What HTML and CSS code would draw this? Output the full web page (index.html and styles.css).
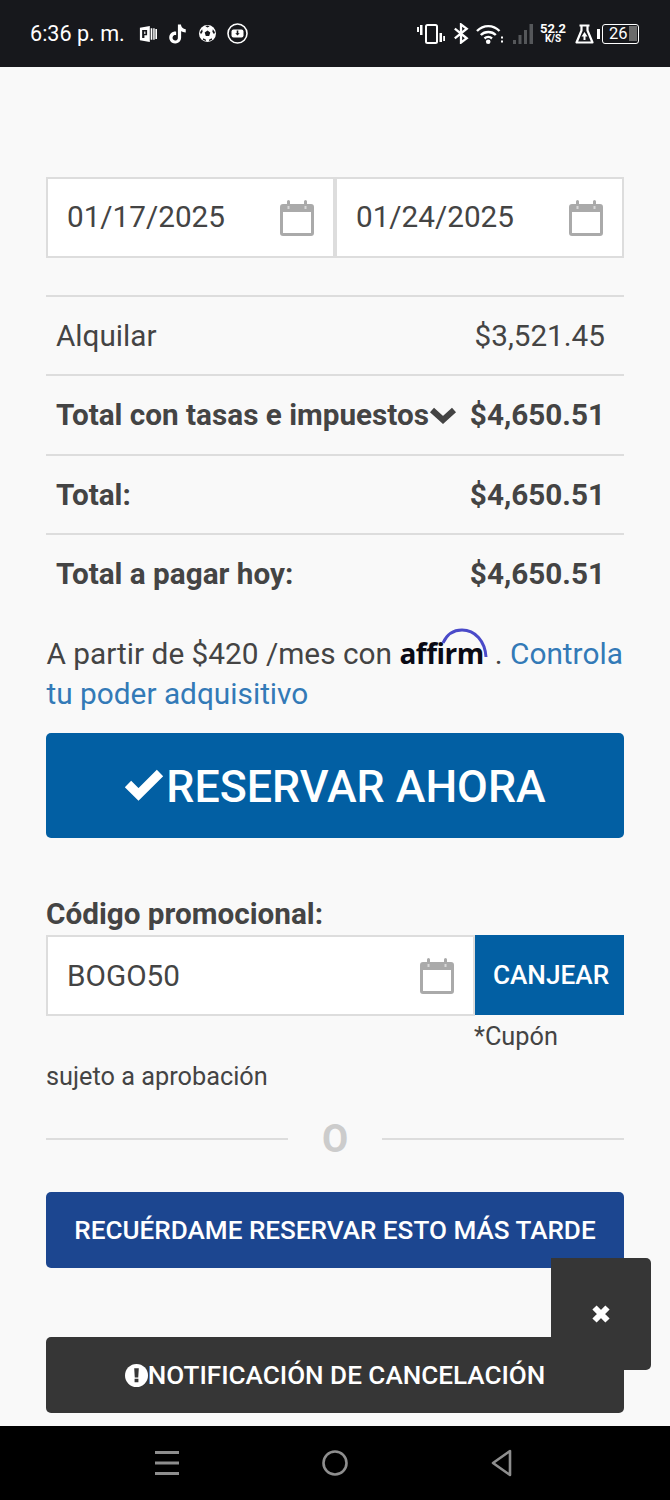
FILE: index.html
```html
<!DOCTYPE html>
<html lang="es">
<head>
    <meta charset="UTF-8">
    <meta name="viewport" content="width=device-width, initial-scale=1.0">
    <title>Reservar</title>
    <link rel="stylesheet" href="styles.css">
</head>
<body>
    <header class="status-bar">
        <div class="status-left">
            <span class="clock">6:36 p. m.</span>
            <svg class="ic-news" width="18" height="18" viewBox="0 0 20 20"><path fill="#fff" d="M1 3l11-2v18L1 17z"/><path fill="#17181c" d="M3.500 5.500h5.500v6H6v3H3.500zM5.800 7.300v2.600h1.300V7.300z"/><path fill="#fff" d="M13 3.500h1.800v13H13zM15.800 3.500h1.600v13h-1.600zM18.200 4.500H20v11h-1.800z"/></svg>
            <svg class="ic-tiktok" width="19" height="20" viewBox="0 0 24 24"><path fill="#fff" d="M12.525.02c1.31-.02 2.61-.01 3.91-.02.08 1.53.63 3.09 1.75 4.17 1.12 1.11 2.7 1.62 4.24 1.79v4.03c-1.44-.05-2.89-.35-4.2-.97-.57-.26-1.1-.59-1.62-.93-.01 2.92.01 5.84-.02 8.75-.08 1.4-.54 2.79-1.35 3.94-1.31 1.92-3.58 3.17-5.91 3.21-1.43.08-2.86-.31-4.08-1.03-2.02-1.19-3.44-3.37-3.65-5.71-.02-.5-.03-1-.01-1.49.18-1.9 1.12-3.72 2.58-4.96 1.66-1.44 3.98-2.13 6.15-1.72.02 1.48-.04 2.96-.04 4.44-.99-.32-2.15-.23-3.02.37-.63.41-1.11 1.04-1.36 1.75-.21.51-.15 1.07-.14 1.61.24 1.64 1.82 3.02 3.5 2.87 1.12-.01 2.19-.66 2.77-1.61.19-.33.4-.67.41-1.06.1-1.79.06-3.57.07-5.36.01-4.03-.01-8.05.02-12.07z"/></svg>
            <svg class="ic-ball" width="17" height="17" viewBox="0 0 20 20"><circle cx="10" cy="10" r="10" fill="#fff"/><path fill="#17181c" d="M10 6.500l3.300 2.400-1.300 3.900H8l-1.300-3.900zM7.500 1.500l2.500 1.300 2.500-1.300-2.500-.8zM1.200 8.500l2.500-3.500.6 3-2 2.800zM18.800 8.500l-2.500-3.500-.6 3 2 2.800zM5 15.500l3.300 1.800-.3 1.600-3.500-1.500zM15 15.500l-3.300 1.800.3 1.600 3.500-1.500z"/></svg>
            <svg class="ic-video" width="21" height="21" viewBox="0 0 21 21"><circle cx="10.500" cy="10.500" r="9.500" fill="none" stroke="#fff" stroke-width="1.600"/><rect x="4.500" y="6.500" width="12" height="8" rx="2" fill="#fff"/><path fill="#17181c" d="M9.700 7.500h1.600v2.700h1.400l-2.200 2.300-2.200-2.300h1.400z"/></svg>
        </div>
        <div class="status-right">
            <svg class="ic-vibrate" width="28" height="20" viewBox="0 0 28 20"><path fill="#fff" d="M0 3h2v5H0zM3 1h2.500v10H3z"/><rect x="9" y="1" width="11" height="18" rx="1.500" fill="none" stroke="#fff" stroke-width="2"/><path fill="#fff" d="M22.500 9H25v9h-2.500zM26.200 12H28v5h-1.800z"/></svg>
            <svg class="ic-bt" width="16" height="21" viewBox="0 0 16 22"><path fill="none" stroke="#fff" stroke-width="2.400" d="M1.500 6l12.500 10-6 4.500V1.500L14 6 1.500 16"/></svg>
            <svg class="ic-wifi" width="27" height="20" viewBox="0 0 27 20"><path fill="none" stroke="#fff" stroke-width="2.400" d="M1 7c6.500-6.500 16-6.500 22.500 0M4.800 11c4-4 11-4 15 0M8.500 14.500c2.200-2 5.300-2 7.500 0"/><circle cx="12.200" cy="17.700" r="2.300" fill="#fff"/><path fill="#fff" d="M25 12.500h2v2h-2zM25 16.500h2v2h-2z"/></svg>
            <svg class="ic-signal" width="20" height="20" viewBox="0 0 20 20"><path fill="#55575a" d="M0 16h3v4H0zM5.500 11h3v9h-3zM11 6h3v14h-3zM16.500 0H20v20h-3.500z"/></svg>
            <div class="speed"><span>52.2</span><span class="speed-unit">K/S</span></div>
            <svg class="ic-flask" width="19" height="20" viewBox="0 0 19 20"><path fill="none" stroke="#fff" stroke-width="2.200" stroke-linejoin="round" d="M4.500 1.500h10M6.500 1.500v5L1.500 18.500h16L12.500 6.500v-5"/><path fill="#fff" d="M9.500 8l3 4.500h-2V16h-2v-3.500h-2z"/></svg>
            <div class="battery">
                <span class="battery-cap"></span>
                <div class="battery-body"><span>26</span><span class="battery-rest"></span></div>
            </div>
        </div>
    </header>

    <main class="page">
        <div class="dates">
            <div class="field">
                <span>01/17/2025</span>
                <svg class="cal" viewBox="0 0 34 36"><use href="#cal"/></svg>
            </div>
            <div class="field">
                <span>01/24/2025</span>
                <svg class="cal" viewBox="0 0 34 36"><use href="#cal"/></svg>
            </div>
        </div>

        <table class="prices">
            <tr><td>Alquilar</td><td class="amount">$3,521.45</td></tr>
            <tr class="strong">
                <td><span class="with-chevron">Total con tasas e impuestos<svg width="28" height="20" viewBox="0 0 28 20"><path fill="none" stroke="#444" stroke-width="6" d="M3 5l11 10L25 5"/></svg></span></td>
                <td class="amount">$4,650.51</td>
            </tr>
            <tr class="strong"><td>Total:</td><td class="amount">$4,650.51</td></tr>
            <tr class="strong"><td>Total a pagar hoy:</td><td class="amount">$4,650.51</td></tr>
        </table>

        <p class="affirm-line">A partir de $420 /mes con <span class="affirm"><span class="affirm-word">affirm</span><svg class="affirm-arc" width="48" height="32" viewBox="0 0 48 32"><path fill="none" stroke="#4a4ac9" stroke-width="3" d="M2 15C6 6 13 2 21 2c13 0 23 11 24 27"/></svg></span> . <a href="#">Controla</a> <a href="#">tu poder adquisitivo</a></p>

        <button type="button" class="btn-book"><svg width="40" height="32" viewBox="0 0 40 32"><path fill="none" stroke="#fff" stroke-width="9" d="M4 15l10.500 10.500L36 4"/></svg>RESERVAR AHORA</button>

        <label class="promo-label">Código promocional:</label>
        <div class="promo">
            <div class="field">
                <span>BOGO50</span>
                <svg class="cal" viewBox="0 0 34 36"><use href="#cal"/></svg>
            </div>
            <button type="button" class="btn-redeem">CANJEAR</button>
        </div>
        <p class="coupon-note"><span class="coupon-gap"></span>*Cupón sujeto a aprobación</p>

        <div class="divider"><span>O</span></div>

        <button type="button" class="btn-remind">RECUÉRDAME RESERVAR ESTO MÁS TARDE</button>

        <button type="button" class="btn-cancel"><svg width="23" height="23" viewBox="0 0 24 24"><circle cx="12" cy="12" r="12" fill="#fff"/><path fill="#363636" d="M9.600 4.500h4.800l-.6 9.500h-3.600zM10 15.500h4V19h-4z"/></svg>NOTIFICACIÓN DE CANCELACIÓN</button>

        <button type="button" class="btn-close" aria-label="Cerrar"><svg width="20" height="20" viewBox="0 0 20 20"><path fill="none" stroke="#fff" stroke-width="6" d="M3.500 3.500l13 13M16.500 3.500l-13 13"/></svg></button>
    </main>

    <footer class="nav-bar">
        <svg width="26" height="26" viewBox="0 0 26 26"><path fill="#8e8e8e" d="M1 1h24v3H1zM1 11.500h24v3H1zM1 22h24v3H1z"/></svg>
        <svg width="26" height="26" viewBox="0 0 26 26"><circle cx="13" cy="13" r="11.500" fill="none" stroke="#8e8e8e" stroke-width="2.600"/></svg>
        <svg width="24" height="28" viewBox="0 0 24 28"><path fill="none" stroke="#8e8e8e" stroke-width="2.600" stroke-linejoin="round" d="M20 2v24L3 14z"/></svg>
    </footer>

    <svg width="0" height="0" class="defs">
        <symbol id="cal" viewBox="0 0 34 36">
            <path fill="#aaa" d="M3 4h4V1.500a1.500 1.500 0 0 1 3 0V4h14V1.500a1.500 1.500 0 0 1 3 0V4h4a3 3 0 0 1 3 3v26a3 3 0 0 1-3 3H3a3 3 0 0 1-3-3V7a3 3 0 0 1 3-3z"/>
            <rect x="3" y="12" width="28" height="21" fill="#fff"/>
            <path fill="#d8d8d8" d="M7.500 6h2v3h-2zM24.500 6h2v3h-2z"/>
        </symbol>
    </svg>
</body>
</html>
```

FILE: styles.css
```css
body {
    font-family: Roboto, "Liberation Sans", sans-serif;
    margin: 0;
    padding: 0;
    width: 670px;
    height: 1500px;
    overflow: hidden;
    background-color: #f9f9f9;
    color: #444;
    display: flex;
    flex-direction: column;
}

.defs {
    position: absolute;
}

/* status bar */
.status-bar {
    height: 67px;
    flex: none;
    background-color: #17181c;
    color: #fff;
    display: flex;
    justify-content: space-between;
    align-items: center;
    padding: 0 31px 0 30px;
    box-sizing: border-box;
}

.status-left, .status-right {
    display: flex;
    align-items: center;
}

.clock {
    font-size: 21.600px;
    margin-right: 14px;
}

.ic-tiktok { margin-left: 11px; }
.ic-ball { margin-left: 12px; }
.ic-video { margin-left: 11px; }
.ic-bt { margin-left: 8px; }
.ic-wifi { margin-left: 7px; }
.ic-signal { margin-left: 10px; }
.ic-flask { margin-left: 9px; }

.speed {
    display: flex;
    flex-direction: column;
    align-items: center;
    font-size: 13px;
    font-weight: 700;
    line-height: 11px;
    width: 26px;
    margin-left: 7px;
}

.speed-unit {
    font-size: 10px;
    line-height: 10px;
}

.battery {
    display: flex;
    align-items: center;
    margin-left: 3px;
}

.battery-cap {
    width: 3px;
    height: 10px;
    background-color: #fff;
    margin-right: 2px;
}

.battery-body {
    width: 37px;
    height: 20px;
    border: 1.500px solid #fff;
    border-radius: 3px;
    box-sizing: border-box;
    display: flex;
    align-items: center;
    justify-content: flex-end;
    font-size: 16.500px;
    padding: 1.500px;
    gap: 1px;
}

.battery-rest {
    width: 8px;
    height: 100%;
    background-color: #6b6b6b;
}

/* page */
.page {
    flex: 1;
    position: relative;
    overflow: hidden;
    padding: 110px 46px 0;
}

.dates {
    display: flex;
    width: 578px;
}

.field {
    flex: 1;
    height: 81px;
    background: #fff;
    border: 2px solid #ddd;
    box-sizing: border-box;
    display: flex;
    align-items: center;
    justify-content: space-between;
    padding: 0 19px;
    font-size: 29.700px;
    color: #444;
}

.dates .field span {
    margin-bottom: 2px;
}

.cal {
    width: 34px;
    height: 36px;
}

.prices {
    width: 578px;
    margin-top: 37px;
    border-collapse: collapse;
    font-size: 29.700px;
}

.prices td {
    height: 79.250px;
    padding: 0 0 0 10px;
    border-top: 2px solid #ddd;
    box-sizing: border-box;
}

.prices .amount {
    text-align: right;
    white-space: nowrap;
    padding: 0 19px 0 0;
}

.prices .strong td {
    font-weight: 700;
}

.with-chevron {
    display: flex;
    align-items: center;
    white-space: nowrap;
}

.affirm-line {
    margin: 20px 0 0;
    padding: 0 0 1px 0.500px;
    font-size: 29.800px;
    line-height: 40px;
}

.affirm-line a {
    color: #337ab7;
    text-decoration: none;
}

.affirm {
    position: relative;
    display: inline-block;
    width: 88px;
}

.affirm-word {
    font-family: "Open Sans", sans-serif;
    font-size: 28px;
    font-weight: 700;
    color: #0a0a14;
    letter-spacing: -0.5px;
}

.affirm-arc {
    position: absolute;
    left: 42px;
    top: -5px;
}

button {
    font-family: inherit;
    color: #fff;
    border: none;
    border-radius: 5px;
    display: flex;
    align-items: center;
    justify-content: center;
    width: 578px;
    padding: 0;
}

.btn-book {
    margin-top: 18px;
    height: 105px;
    padding-top: 3px;
    background-color: #025fa3;
    font-size: 44.700px;
    font-weight: 500;
}

.btn-book svg {
    margin: 0 2px 4px 0;
}

.promo-label {
    display: block;
    margin-top: 58px;
    font-size: 29.700px;
    font-weight: 700;
    line-height: 36px;
}

.promo {
    display: flex;
    width: 578px;
    margin-top: 3px;
}

.promo .field {
    flex: 1;
}

.btn-redeem {
    width: 149px;
    height: 80px;
    flex: none;
    background-color: #025fa3;
    border-radius: 0;
    font-size: 26.200px;
    font-weight: 500;
    padding-left: 3px;
}

.coupon-note {
    margin: 1px 0 0;
    font-size: 25.300px;
    line-height: 40px;
}

.coupon-gap {
    display: inline-block;
    width: 428px;
}

.divider {
    display: flex;
    align-items: center;
    gap: 34px;
    margin-top: 20px;
    width: 578px;
    font-size: 38px;
    font-weight: 700;
    color: #ccc;
    line-height: 44px;
}

.divider::before, .divider::after {
    content: "";
    flex: 1;
    height: 2px;
    background-color: #ddd;
}

.btn-remind {
    margin-top: 31px;
    height: 76px;
    background-color: #1c4690;
    font-size: 26.100px;
    font-weight: 500;
}

.btn-cancel {
    margin-top: 69px;
    height: 76px;
    background-color: #363636;
    font-size: 26.100px;
    font-weight: 500;
}

.btn-close {
    position: absolute;
    left: 551px;
    top: 1191px;
    width: 100px;
    height: 112px;
    background-color: #363636;
    border-radius: 0 5px 5px 0;
}

.nav-bar {
    height: 74px;
    flex: none;
    background-color: #000;
    display: flex;
    align-items: center;
    padding: 0 156px 0 154px;
    justify-content: space-between;
    box-sizing: border-box;
}
```
